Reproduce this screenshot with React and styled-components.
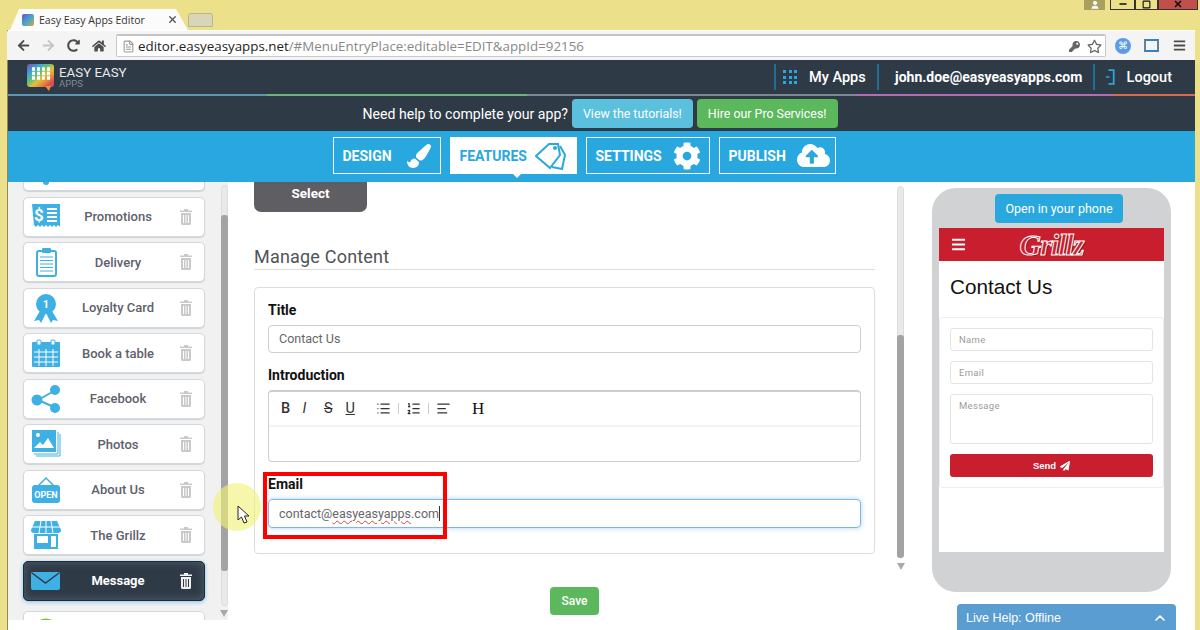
import React from "react";
import styled, { createGlobalStyle } from "styled-components";
import {
  FaCog,
  FaCloudUploadAlt,
  FaPaintBrush,
  FaPaperPlane,
  FaArrowLeft,
  FaArrowRight,
  FaRedoAlt,
  FaHome,
  FaKey,
  FaRegStar,
  FaBars,
} from "react-icons/fa";
import { ChevronUp, List, ListOrdered, AlignLeft, X, Minus, Square, FileText, User } from "lucide-react";

const blue = "#3eb0e4";
const dark = "#2f3a47";

const GlobalStyle = createGlobalStyle`
  * { box-sizing: border-box; }
  html, body { margin: 0; padding: 0; overflow: hidden; }
  body { background: #ede08a; font-family: Roboto, "Liberation Sans", sans-serif; }
`;

const Frame = styled.div`
  width: 1200px;
  height: 630px;
  padding: 0 5px 0 7px;
  display: flex;
  flex-direction: column;
  overflow: hidden;
`;

const TitleBar = styled.div`
  height: 30px;
  flex: none;
  display: flex;
  align-items: flex-end;
  padding-left: 3px;
`;

const Tab = styled.div`
  width: 178px;
  height: 21px;
  background: #fbfbfb;
  clip-path: polygon(0 100%, 9px 0, 166px 0, 178px 100%);
  display: flex;
  align-items: center;
  padding: 0 10px 0 12px;
  font: 10.5px "Open Sans", sans-serif;
  color: #333;
  white-space: nowrap;
`;

const Favicon = styled.span`
  flex: none;
  width: 12px;
  height: 12px;
  margin-right: 5px;
  background: linear-gradient(135deg, #7c4bb0, #3fa7d6 50%, #e2a23b);
  border-radius: 2px;
`;

const TabTitle = styled.span`
  flex: 1;
`;

const NewTab = styled.div`
  width: 25px;
  height: 14px;
  margin: 0 0 3px 0;
  background: #d7d6b8;
  border-radius: 3px 3px 0 0;
  border: 1px solid #b9b78f;
`;

const WindowControls = styled.div`
  margin-left: auto;
  align-self: flex-start;
  display: flex;
  margin-right: -3px;
`;

const UserBadge = styled.div`
  width: 21px;
  height: 10px;
  margin-right: 5px;
  background: #a99f60;
  color: #fff;
  display: flex;
  justify-content: center;
  overflow: hidden;
`;

const WindowButton = styled.div`
  width: ${(p) => p.$w}px;
  height: 10px;
  background: ${(p) => p.$bg || "#ede08a"};
  border: 1px solid #333;
  border-top: 0;
  display: flex;
  align-items: flex-end;
  justify-content: center;
  color: #111;
  overflow: hidden;
`;

const Browser = styled.div`
  flex: 1;
  min-height: 0;
  display: flex;
  flex-direction: column;
  border-left: 1px solid #8e8a5a;
  background: #fff;
`;

const Toolbar = styled.div`
  height: 30px;
  flex: none;
  margin-left: -1px;
  background: #f4f4f4;
  border-top: 1px solid #fff;
  border-radius: 3px 3px 0 0;
  display: flex;
  align-items: center;
  padding: 0 0 0 4px;
  color: #555;
`;

const NavIcon = styled.span`
  flex: none;
  width: ${(p) => p.$w || 25}px;
  display: flex;
  justify-content: center;
  color: ${(p) => p.$color || "#4d4d4d"};
`;

const Address = styled.div`
  flex: none;
  margin-left: 5px;
  width: 990px;
  height: 23px;
  background: #fff;
  border: 1px solid #c9c9c9;
  border-top: 2px solid #c4c4c4;
  border-radius: 2px;
  display: flex;
  align-items: center;
  padding: 0 3px 0 5px;
  font: 13.35px "Open Sans", sans-serif;
  color: #888;
  white-space: nowrap;
`;

const Host = styled.span`
  color: #222;
  margin-left: 3px;
`;

const AddressTools = styled.span`
  margin-left: auto;
  display: flex;
  align-items: center;
  gap: 7px;
  color: #666;
`;

const ExtensionDot = styled.span`
  width: 16px;
  height: 16px;
  border-radius: 50%;
  background: #5d9be6;
  color: #fff;
  font-size: 10px;
  line-height: 16px;
  text-align: center;
`;

const FullBox = styled.span`
  width: 15px;
  height: 13px;
  border: 2px solid #6b7f92;
  border-top-color: #2f83c4;
  border-bottom-color: #2f83c4;
`;

const TopNav = styled.div`
  height: 34px;
  flex: none;
  background: ${dark};
  display: flex;
  align-items: center;
  padding: 0 23px 0 19px;
  color: #fff;
`;

const BrandMark = styled.svg`
  width: 27px;
  height: 27px;
  margin-right: 5px;
`;

const BrandText = styled.div`
  line-height: 1;
  font-size: 13.3px;
  color: #e8e8e8;
`;

const BrandSub = styled.div`
  font-size: 9.5px;
  color: #7f8a95;
`;

const NavSpacer = styled.div`
  flex: 1;
`;

const NavItem = styled.div`
  flex: none;
  height: 26px;
  display: flex;
  align-items: center;
  border-left: 2px solid #1f6e95;
  padding-left: ${(p) => p.$pad}px;
  width: ${(p) => p.$w}px;
  font-size: ${(p) => (p.$strong ? 14 : 14.5)}px;
  font-weight: ${(p) => (p.$strong ? 700 : 500)};
  white-space: nowrap;
`;

const GridDots = styled.span`
  display: grid;
  grid-template-columns: repeat(3, 3px);
  gap: 2.5px;
  margin-right: 12px;
  & > i {
    height: 3px;
    background: #2ba7e0;
  }
`;

const LogoutMark = styled.svg`
  width: 11px;
  height: 18px;
  margin-right: 12px;
`;

const RainbowLine = styled.div`
  height: 2px;
  flex: none;
  display: flex;
  background: ${dark};
`;

const RainbowPart = styled.div`
  width: ${(p) => p.$w}px;
  background: ${(p) => p.$c};
`;

const HelpBar = styled.div`
  height: 35px;
  flex: none;
  background: ${dark};
  display: flex;
  align-items: center;
  justify-content: center;
  gap: 4px;
  padding-right: 3px;
  color: #fff;
  font-size: 14.1px;
`;

const HelpButton = styled.div`
  height: 29px;
  padding: 0 11px;
  border-radius: 4px;
  background: ${(p) => p.$bg};
  color: #fff;
  font-size: 12.4px;
  display: flex;
  align-items: center;
`;

const ModeBar = styled.div`
  height: 51px;
  flex: none;
  background: #29a8e0;
  display: flex;
  justify-content: center;
  align-items: flex-start;
  padding: 6px 35px 0 0;
  gap: 9px;
`;

const ModeTab = styled.div`
  position: relative;
  width: ${(p) => p.$w}px;
  height: 37px;
  border: 1px solid #fff;
  background: ${(p) => (p.$active ? "#fff" : "transparent")};
  color: ${(p) => (p.$active ? "#29a8e0" : "#fff")};
  display: flex;
  align-items: center;
  padding-left: 9px;
  font-size: 14px;
  font-weight: 700;
  ${(p) =>
    p.$active &&
    `&::after {
      content: "";
      position: absolute;
      left: 50%;
      bottom: -5px;
      margin-left: -1px;
      border: 5px solid transparent;
      border-bottom: 0;
      border-top-color: #fff;
    }`}
`;

const ModeIcon = styled.span`
  margin-left: auto;
  margin-right: ${(p) => p.$mr || 9}px;
  display: flex;
`;

const Main = styled.div`
  position: relative;
  flex: 1;
  min-height: 0;
  display: flex;
  align-items: flex-start;
`;

const Sidebar = styled.div`
  position: relative;
  width: 220px;
  height: 438px;
  flex: none;
  background: #f1f1f1;
  overflow: hidden;
  padding-left: 15px;
`;

const MenuList = styled.div`
  width: 182px;
  margin-top: -31px;
  display: flex;
  flex-direction: column;
  gap: 5.5px;
`;

const MenuItem = styled.div`
  flex: none;
  height: 40px;
  display: grid;
  grid-template-columns: 44px 1fr 36px;
  align-items: center;
  justify-items: center;
  border-radius: 5px;
  background: ${(p) => (p.$active ? dark : "#fff")};
  border: 1px solid ${(p) => (p.$active ? "#1d2b38" : "#d3d8dd")};
  box-shadow: ${(p) => (p.$active ? "0 1px 4px #7cc4ea, inset 0 0 8px #55616e" : "0 1px 1px #d0d3d6")};
  margin-bottom: ${(p) => (p.$active ? 4.5 : 0)}px;
  color: ${(p) => (p.$active ? "#fff" : "#5d616c")};
  font-size: 13px;
  font-weight: ${(p) => (p.$active ? 700 : 500)};
`;

const MenuIcon = styled.svg`
  width: 30px;
  height: 30px;
  display: block;
`;

const TrashIcon = styled.svg`
  width: 12px;
  height: 16px;
  display: block;
`;

const ScrollTrack = styled.div`
  position: absolute;
  top: ${(p) => p.$top}px;
  right: ${(p) => p.$right}px;
  width: 7px;
  height: ${(p) => p.$h}px;
  background: #e9e9e9;
  border: 1px solid #dcdcdc;
  border-radius: 4px;
`;

const ScrollThumb = styled.div`
  position: absolute;
  left: -1px;
  right: -1px;
  top: ${(p) => p.$top}px;
  bottom: ${(p) => p.$bottom}px;
  background: #a3a3a3;
  border-radius: 3px;
`;

const ScrollArrow = styled.div`
  position: absolute;
  top: ${(p) => p.$top}px;
  right: ${(p) => p.$right}px;
  border: 4px solid transparent;
  border-bottom: 0;
  border-top: 7px solid #a9a9a9;
`;

const FormColumn = styled.div`
  width: 621px;
  margin-left: 26px;
  flex: none;
`;

const SelectButton = styled.div`
  width: 113px;
  height: 30px;
  background: #5f5f63;
  border-radius: 0 0 7px 7px;
  color: #fff;
  font-size: 13.5px;
  font-weight: 700;
  display: flex;
  align-items: center;
  justify-content: center;
  padding-bottom: 8px;
`;

const Heading = styled.h2`
  margin: 33px 0 17px;
  height: 25px;
  font-size: 18px;
  letter-spacing: 0.2px;
  font-weight: 400;
  color: #4f5358;
  line-height: 23px;
  border-bottom: 1px solid #ddd;
`;

const Card = styled.div`
  height: 267px;
  border: 1px solid #ddd;
  border-radius: 4px;
  padding: 14px 13px 0;
`;

const Label = styled.div`
  height: 16px;
  line-height: 16px;
  margin-bottom: 7px;
  font-size: 14px;
  font-weight: 700;
  color: #111;
`;

const TextField = styled.div`
  height: ${(p) => (p.$focus ? 29 : 28)}px;
  border: 1px solid ${(p) => (p.$focus ? "#7fb5e6" : "#cfcfcf")};
  border-radius: 4px;
  box-shadow: ${(p) => (p.$focus ? "0 0 5px rgba(102, 175, 233, 0.55)" : "none")};
  display: flex;
  align-items: center;
  padding: 0 0 ${(p) => (p.$focus ? 1 : 2)}px 10px;
  font-size: 12.5px;
  color: #666;
  margin-bottom: 14px;
`;

const Spelled = styled.span`
  text-decoration: underline wavy #e04040 1px;
  text-underline-offset: 2px;
`;

const Caret = styled.span`
  width: 1px;
  height: 15px;
  background: #333;
`;

const Editor = styled.div`
  height: 72px;
  border: 1px solid #cfcfcf;
  border-top-width: 2px;
  border-radius: 4px;
  margin-bottom: 14px;
`;

const EditorTools = styled.div`
  height: 35px;
  border-bottom: 2px solid #f3f3f3;
  display: flex;
  align-items: center;
  padding-left: 12px;
  color: #333;
  font-size: 14.5px;
`;

const EditorLetter = styled.span`
  width: 21.5px;
  font-weight: ${(p) => (p.$b ? 500 : 400)};
  font-style: ${(p) => (p.$i ? "italic" : "normal")};
  text-decoration: ${(p) => p.$d || "none"};
`;

const ListTools = styled.span`
  display: flex;
  align-items: center;
  margin-left: 9px;
`;

const EditorSep = styled.span`
  width: 1px;
  height: 11px;
  margin: 0 7px;
  background: #ccc;
`;

const HeadingTool = styled.span`
  margin-left: 21px;
  font: 17px "Liberation Serif", serif;
  color: #111;
`;

const EmailField = styled.div`
  position: relative;
`;

const RedBox = styled.div`
  position: absolute;
  left: -5px;
  top: -4px;
  width: 184px;
  height: 67px;
  border: 4px solid #f00;
`;

const SaveRow = styled.div`
  display: flex;
  justify-content: center;
  margin-top: 33px;
  padding-left: 20px;
`;

const SaveButton = styled.div`
  width: 49px;
  height: 28px;
  border-radius: 4px;
  background: #5cb85c;
  color: #fff;
  font-size: 12px;
  font-weight: 500;
  display: flex;
  align-items: center;
  justify-content: center;
`;

const Phone = styled.div`
  width: 239px;
  height: 404px;
  margin: 6px 0 0 57px;
  flex: none;
  background: #d1d2d4;
  border-radius: 24px;
  padding: 6px 7px 0;
`;

const OpenButton = styled.div`
  width: 128px;
  height: 29px;
  margin: 0 0 5px 56px;
  background: #29a8e0;
  border-radius: 4px;
  color: #fff;
  font-size: 12.5px;
  display: flex;
  align-items: center;
  justify-content: center;
`;

const Screen = styled.div`
  height: 324px;
  background: #fff;
`;

const AppHeader = styled.div`
  position: relative;
  height: 33px;
  background: #c81e2e;
  display: flex;
  align-items: center;
  justify-content: center;
  color: #fff;
`;

const MenuGlyph = styled.span`
  position: absolute;
  left: 12px;
  display: flex;
`;

const AppLogo = styled.span`
  font: italic 700 30px "Liberation Serif", serif;
  letter-spacing: -1px;
  color: #c81e2e;
  -webkit-text-stroke: 1px #fff;
  text-shadow: 1px 1px 0 #6b1018;
`;

const PageTitle = styled.div`
  height: 56px;
  padding: 14px 11px 0;
  font: 20.7px "Liberation Sans", sans-serif;
  color: #111;
`;

const AppCard = styled.div`
  height: 171px;
  border: 1px solid #eee;
  border-radius: 3px;
  padding: 10px 10px 0;
`;

const AppInput = styled.div`
  height: ${(p) => p.$h || 23}px;
  margin-bottom: 10px;
  border: 1px solid #e4e4e4;
  border-radius: 3px;
  padding: ${(p) => (p.$h ? "5px" : "0")} 8px 0;
  display: flex;
  align-items: ${(p) => (p.$h ? "flex-start" : "center")};
  font: 9.5px Roboto, sans-serif;
  color: #9c9c9c;
  letter-spacing: 0.3px;
`;

const SendButton = styled.div`
  height: 23px;
  background: #c81e2e;
  border-radius: 3px;
  color: #fff;
  font: 700 9.5px "Liberation Sans", sans-serif;
  display: flex;
  align-items: center;
  justify-content: center;
  gap: 4px;
`;

const LiveHelp = styled.div`
  position: absolute;
  left: 949px;
  bottom: 0;
  width: 219px;
  height: 26px;
  background: #5a9dd0;
  border-radius: 4px 4px 0 0;
  color: #fff;
  font: 12.5px "Liberation Sans", sans-serif;
  display: flex;
  align-items: center;
  justify-content: space-between;
  padding: 2px 8px 0 9px;
`;

const Highlight = styled.div`
  position: absolute;
  left: 205px;
  top: 301px;
  width: 48px;
  height: 48px;
  border-radius: 50%;
  background: rgba(242, 242, 120, 0.62);
`;

const Pointer = styled.svg`
  position: absolute;
  left: 229px;
  top: 323px;
  width: 13px;
  height: 19px;
`;

const Trash = ({ color }) => (
  <TrashIcon viewBox="0 0 12 16" fill={color}>
    <path d="M4 0h4v1.5h4V3H0V1.5h4z" />
    <path d="M1 4h10v10.5a1.5 1.5 0 0 1-1.5 1.5h-7A1.5 1.5 0 0 1 1 14.5zM3 6v8h1V6zm2.5 0v8h1V6zM8 6v8h1V6z" fillRule="evenodd" />
  </TrashIcon>
);

const icons = {
  pin: <circle cx="15" cy="26" r="3" fill={blue} />,
  promo: (
    <>
      <path d="M1 2h28v23l-2-2-2 2-2-2-2 2-2-2-2 2-2-2-2 2-2-2-2 2-2-2-2 2-2-2z" fill={blue} />
      <text x="3" y="19" fontSize="17" fontWeight="700" fontFamily="Roboto" fill="#fff">$</text>
      <path d="M16 7h10M16 11h10M16 15h10M16 19h10" stroke="#fff" strokeWidth="2" />
    </>
  ),
  delivery: (
    <>
      <rect x="6" y="4" width="19" height="25" rx="2" fill="#fff" stroke={blue} strokeWidth="2" />
      <rect x="11" y="1" width="9" height="5" rx="1" fill={blue} />
      <path d="M9 10h13M9 13.500h13M9 17h13M9 20.500h13M9 24h13" stroke={blue} strokeWidth="1" />
    </>
  ),
  loyalty: (
    <>
      <path d="M9 18 3 28l5-1 2 3 5-10zM21 18l6 10-5-1-2 3-5-10z" fill={blue} />
      <circle cx="15" cy="11" r="10" fill={blue} />
      <text x="15" y="15" textAnchor="middle" fontSize="11" fontWeight="700" fontFamily="Roboto" fill="#fff">1</text>
    </>
  ),
  table: (
    <>
      <rect x="1" y="4" width="28" height="25" rx="1" fill={blue} />
      <rect x="6" y="2" width="4" height="5" rx="1" fill="#fff" stroke={blue} />
      <rect x="20" y="2" width="4" height="5" rx="1" fill="#fff" stroke={blue} />
      <path d="M3 14h24M3 19h24M3 24h24M8 11v17M15 11v17M22 11v17" stroke="#fff" strokeWidth="1" />
    </>
  ),
  share: (
    <>
      <path d="M7 16 23 7M7 16l16 7" stroke={blue} strokeWidth="2" />
      <circle cx="6" cy="16" r="5.500" fill={blue} />
      <circle cx="24" cy="6" r="5" fill={blue} />
      <circle cx="24" cy="24" r="5" fill={blue} />
    </>
  ),
  photos: (
    <>
      <path d="M5 27h24V5" fill="none" stroke={blue} />
      <path d="M3 25h24V3" fill="none" stroke={blue} />
      <rect x="1" y="1" width="24" height="22" fill={blue} />
      <circle cx="7" cy="6" r="2" fill="#fff" />
      <path d="M3 19l6-6 3 3 5-7 6 10z" fill="#fff" />
    </>
  ),
  open: (
    <>
      <path d="M7 11 15 3l8 8" fill="none" stroke={blue} strokeWidth="1.500" />
      <rect x="1" y="10" width="28" height="18" rx="3" fill={blue} />
      <text x="15" y="23" textAnchor="middle" fontSize="9" fontWeight="700" fontFamily="Roboto" fill="#fff">OPEN</text>
    </>
  ),
  shop: (
    <>
      <path d="M4 1h22l4 9a3 3 0 0 1-3 3H3a3 3 0 0 1-3-3z" fill={blue} />
      <path d="M10 1 8 13M15 1v12M20 1l2 12M1 7h28" stroke="#fff" strokeWidth="1" />
      <path d="M3 14h24v15H3z" fill={blue} />
      <rect x="6" y="16" width="11" height="7" fill="#fff" />
      <rect x="20" y="16" width="5" height="11" fill="#fff" />
    </>
  ),
  mail: (
    <>
      <rect x="0" y="6" width="29" height="18" rx="2" fill={blue} />
      <path d="M1 7 14.500 17 28 7" fill="none" stroke={dark} strokeWidth="1.500" />
    </>
  ),
  green: <circle cx="15" cy="17" r="13" fill="none" stroke="#79c142" strokeWidth="3" />,
};

const menu = [
  { icon: "pin", label: "" },
  { icon: "promo", label: "Promotions" },
  { icon: "delivery", label: "Delivery" },
  { icon: "loyalty", label: "Loyalty Card" },
  { icon: "table", label: "Book a table" },
  { icon: "share", label: "Facebook" },
  { icon: "photos", label: "Photos" },
  { icon: "open", label: "About Us" },
  { icon: "shop", label: "The Grillz" },
  { icon: "mail", label: "Message", active: true },
  { icon: "green", label: "" },
];

const rainbow = [
  [259, "#5c97b0"],
  [260, "#6fb07f"],
  [329, "#7d8794"],
  [257, "#b06fb0"],
  [82, "#d9694f"],
];

const brandColors = ["#8a4fb0", "#4f7fd0", "#3fb0c8", "#6cc06a", "#e0c040", "#e8913a", "#d9504f", "#c94f8a"];

const App = () => {
  return (
    <>
      <GlobalStyle />
      <Frame>
        <TitleBar>
          <Tab>
            <Favicon />
            <TabTitle>Easy Easy Apps Editor</TabTitle>
            <X size={11} strokeWidth={3} color="#555" />
          </Tab>
          <NewTab />
          <WindowControls>
            <UserBadge>
              <User size={10} fill="#fff" />
            </UserBadge>
            <WindowButton $w={25}>
              <Minus size={10} strokeWidth={4} />
            </WindowButton>
            <WindowButton $w={23}>
              <Square size={9} strokeWidth={3} />
            </WindowButton>
            <WindowButton $w={40} $bg="#c2504a">
              <X size={10} strokeWidth={4} />
            </WindowButton>
          </WindowControls>
        </TitleBar>
        <Browser>
          <Toolbar>
            <NavIcon>
              <FaArrowLeft size={13} />
            </NavIcon>
            <NavIcon $color="#c4c4c4">
              <FaArrowRight size={13} />
            </NavIcon>
            <NavIcon>
              <FaRedoAlt size={13} />
            </NavIcon>
            <NavIcon>
              <FaHome size={14} />
            </NavIcon>
            <Address>
              <FileText size={13} color="#999" />
              <Host>editor.easyeasyapps.net</Host>/#MenuEntryPlace:editable=EDIT&amp;appId=92156
              <AddressTools>
                <FaKey size={11} />
                <FaRegStar size={15} />
              </AddressTools>
            </Address>
            <NavIcon $w={33}>
              <ExtensionDot>⌘</ExtensionDot>
            </NavIcon>
            <NavIcon $w={24}>
              <FullBox />
            </NavIcon>
            <NavIcon $w={32}>
              <FaBars size={13} />
            </NavIcon>
          </Toolbar>
          <TopNav>
            <BrandMark viewBox="0 0 27 27">
              <defs>
                <linearGradient id="brand" x1="0" y1="0" x2="1" y2="1">
                  {brandColors.map((c, i) => (
                    <stop key={c} offset={i / (brandColors.length - 1)} stopColor={c} />
                  ))}
                </linearGradient>
              </defs>
              <rect x="0" y="0" width="27" height="23" rx="3" fill="url(#brand)" />
              <path d="M5 5h3M10 5h3M15 5h3M20 5h3M5 9.500h3M10 9.500h3M15 9.500h3M20 9.500h3M5 14h3M10 14h3M15 14h3M20 14h3" stroke="#fff" strokeWidth="3.500" />
              <path d="M18 22h6l-2 5z" fill="#e8913a" />
            </BrandMark>
            <BrandText>
              EASY EASY
              <BrandSub>APPS</BrandSub>
            </BrandText>
            <NavSpacer />
            <NavItem $pad={7} $w={103}>
              <GridDots>
                {Array.from({ length: 9 }, (_, i) => (
                  <i key={i} />
                ))}
              </GridDots>
              My Apps
            </NavItem>
            <NavItem $pad={16} $w={216} $strong>
              john.doe@easyeasyapps.com
            </NavItem>
            <NavItem $pad={10} $w={79}>
              <LogoutMark viewBox="0 0 11 18" fill="none" stroke="#29a8e0" strokeWidth="2">
                <path d="M4 1h6v16H4M1 9h4" />
              </LogoutMark>
              Logout
            </NavItem>
          </TopNav>
          <RainbowLine>
            {rainbow.map(([w, c]) => (
              <RainbowPart key={c} $w={w} $c={c} />
            ))}
          </RainbowLine>
          <HelpBar>
            Need help to complete your app?
            <HelpButton $bg="#5bc0de">View the tutorials!</HelpButton>
            <HelpButton $bg="#5cb85c">Hire our Pro Services!</HelpButton>
          </HelpBar>
          <ModeBar>
            <ModeTab $w={108}>
              DESIGN
              <ModeIcon>
                <FaPaintBrush size={24} />
              </ModeIcon>
            </ModeTab>
            <ModeTab $w={127} $active>
              FEATURES
              <ModeIcon $mr={10}>
                <svg width="31" height="28" viewBox="0 0 31 28" fill="none" stroke="#29a8e0" strokeWidth="2">
                  <path d="M1 14 14 2h9l2 11-10 13z" />
                  <path d="M17 25l10 2 3-14-5-9" />
                  <circle cx="20" cy="6" r="1" />
                </svg>
              </ModeIcon>
            </ModeTab>
            <ModeTab $w={124}>
              SETTINGS
              <ModeIcon $mr={8}>
                <FaCog size={28} />
              </ModeIcon>
            </ModeTab>
            <ModeTab $w={117}>
              PUBLISH
              <ModeIcon $mr={5}>
                <FaCloudUploadAlt size={33} />
              </ModeIcon>
            </ModeTab>
          </ModeBar>
          <Main>
            <Sidebar>
              <MenuList>
                {menu.map((item) => (
                  <MenuItem key={item.icon} $active={item.active}>
                    <MenuIcon viewBox="0 0 30 30">{icons[item.icon]}</MenuIcon>
                    <span>{item.label}</span>
                    <Trash color={item.active ? "#f2f2f2" : "#c9c9c9"} />
                  </MenuItem>
                ))}
              </MenuList>
              <ScrollTrack $top={3} $right={0} $h={421}>
                <ScrollThumb $top={29} $bottom={34} />
              </ScrollTrack>
              <ScrollArrow $top={428} $right={0} />
            </Sidebar>
            <FormColumn>
              <SelectButton>Select</SelectButton>
              <Heading>Manage Content</Heading>
              <Card>
                <Label>Title</Label>
                <TextField>Contact Us</TextField>
                <Label>Introduction</Label>
                <Editor>
                  <EditorTools>
                    <EditorLetter $b>B</EditorLetter>
                    <EditorLetter $i>I</EditorLetter>
                    <EditorLetter $d="line-through">S</EditorLetter>
                    <EditorLetter $d="underline">U</EditorLetter>
                    <ListTools>
                      <List size={15} />
                      <EditorSep />
                      <ListOrdered size={15} />
                      <EditorSep />
                      <AlignLeft size={15} />
                    </ListTools>
                    <HeadingTool>H</HeadingTool>
                  </EditorTools>
                </Editor>
                <EmailField>
                  <Label>Email</Label>
                  <TextField $focus>
                    contact@<Spelled>easyeasyapps</Spelled>.com
                    <Caret />
                  </TextField>
                  <RedBox />
                </EmailField>
              </Card>
              <SaveRow>
                <SaveButton>Save</SaveButton>
              </SaveRow>
            </FormColumn>
            <ScrollTrack $top={4} $right={291} $h={372}>
              <ScrollThumb $top={148} $bottom={-1} />
            </ScrollTrack>
            <ScrollArrow $top={381} $right={290} />
            <Phone>
              <OpenButton>Open in your phone</OpenButton>
              <Screen>
                <AppHeader>
                  <MenuGlyph>
                    <FaBars size={15} />
                  </MenuGlyph>
                  <AppLogo>Grillz</AppLogo>
                </AppHeader>
                <PageTitle>Contact Us</PageTitle>
                <AppCard>
                  <AppInput>Name</AppInput>
                  <AppInput>Email</AppInput>
                  <AppInput $h={50}>Message</AppInput>
                  <SendButton>
                    Send <FaPaperPlane size={10} />
                  </SendButton>
                </AppCard>
              </Screen>
            </Phone>
            <LiveHelp>
              Live Help: Offline
              <ChevronUp size={16} strokeWidth={2.5} />
            </LiveHelp>
            <Highlight />
            <Pointer viewBox="0 0 13 19">
              <path d="M1 1v14l3.500-3 2.500 6 3-1-2.500-6H12z" fill="#fff" stroke="#222" strokeWidth="1" />
            </Pointer>
          </Main>
        </Browser>
      </Frame>
    </>
  );
};

export default App;
